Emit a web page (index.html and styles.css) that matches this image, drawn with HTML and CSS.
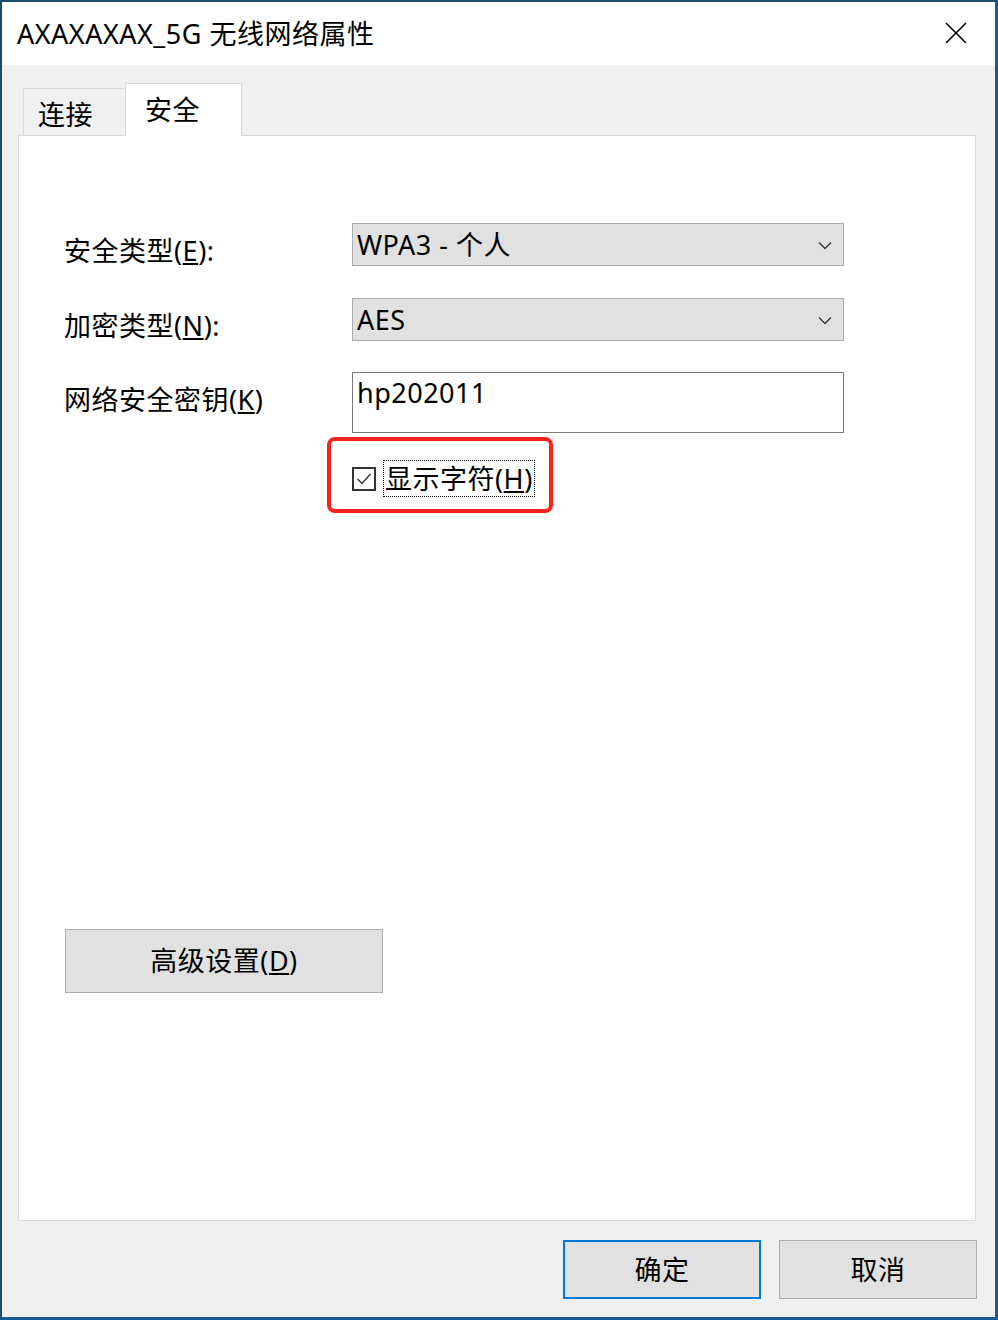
FILE: index.html
```html
<!DOCTYPE html>
<html lang="zh-CN">
<head>
<meta charset="utf-8">
<title>AXAXAXAX_5G 无线网络属性</title>
<link rel="stylesheet" href="styles.css">
</head>
<body>
<div class="window">
  <div class="titlebar">
    <span class="title">AXAXAXAX_5G 无线网络属性</span>
    <svg class="close" width="22" height="22" viewBox="0 0 22 22"><path d="M1 1 L21 21 M21 1 L1 21" stroke="#000" stroke-width="1.6" fill="none"/></svg>
  </div>
  <div class="content">
    <div class="tabs">
      <div class="tab">连接</div>
      <div class="tab active">安全</div>
    </div>
    <div class="panel">
      <div class="row">
        <div class="label">安全类型(<u>E</u>):</div>
        <div class="combo"><span>WPA3 - 个人</span><svg class="chev" width="14" height="9" viewBox="0 0 14 9"><polyline points="1,1.5 7,7.5 13,1.5" stroke="#333" stroke-width="1.3" fill="none"/></svg></div>
      </div>
      <div class="row">
        <div class="label">加密类型(<u>N</u>):</div>
        <div class="combo"><span>AES</span><svg class="chev" width="14" height="9" viewBox="0 0 14 9"><polyline points="1,1.5 7,7.5 13,1.5" stroke="#333" stroke-width="1.3" fill="none"/></svg></div>
      </div>
      <div class="row">
        <div class="label">网络安全密钥(<u>K</u>)</div>
        <div class="textbox">hp202011</div>
      </div>
      <div class="checkrow">
        <div class="checkbox"><svg width="20" height="20" viewBox="0 0 20 20"><polyline points="3.5,10 8,14.5 16.5,5" stroke="#333" stroke-width="1.4" fill="none"/></svg></div>
        <div class="checklabel">显示字符(<u>H</u>)</div>
      </div>
      <div class="highlight"></div>
      <div class="advbtn">高级设置(<u>D</u>)</div>
    </div>
    <div class="buttons">
      <div class="btn primary">确定</div>
      <div class="btn">取消</div>
    </div>
  </div>
</div>
</body>
</html>
```
FILE: styles.css
```css
* { box-sizing: border-box; }
html, body { margin: 0; padding: 0; }
body {
  font-family: "Noto Sans", "Noto Sans CJK SC", sans-serif;
  color: #000;
  background: #1a4f75;
}
.window {
  width: 998px;
  height: 1320px;
  border-style: solid;
  border-color: #1c4e70 #155c96 #155c96 #1c4e70;
  border-width: 2px 3px 3px 2px;
  background: #f0f0f0;
  display: flex;
  flex-direction: column;
  font-size: 27px;
  letter-spacing: 0.5px;
}
.titlebar {
  height: 63px;
  background: #fff;
  display: flex;
  align-items: center;
  justify-content: space-between;
  padding: 0 28px 0 15px;
}
.title {
  line-height: 34px;
}
.close { display: block; margin-top: -2px; }
.content {
  flex: 1;
  display: flex;
  flex-direction: column;
  padding: 18px 18px 18px 16px;
}
.tabs {
  display: flex;
  align-items: flex-end;
  padding-left: 5px;
  height: 52px;
}
.tab {
  height: 47px;
  width: 103px;
  border: 1px solid #d9d9d9;
  border-bottom: none;
  background: #f0f0f0;
  line-height: 34px;
  padding: 9px 0 0 14px;
}
.tab.active {
  height: 53px;
  width: 117px;
  margin-left: -1px;
  margin-bottom: -1px;
  background: #fff;
  padding: 9px 0 0 19px;
  position: relative;
  z-index: 2;
}
.panel {
  width: 958px;
  height: 1086px;
  background: #fff;
  border: 1px solid #d9d9d9;
  position: relative;
  z-index: 1;
  display: flex;
  flex-direction: column;
  padding: 87px 0 0 45px;
}
.row {
  display: flex;
  align-items: flex-start;
  margin-bottom: 32px;
}
.row:nth-child(2) { margin-bottom: 31px; }
.row:nth-child(3) { margin-bottom: 0; }
.label {
  width: 288px;
  height: 43px;
  line-height: 31px;
  padding-top: 12px;
}
.combo {
  width: 492px;
  height: 43px;
  background: #e1e1e1;
  border: 1px solid #adadad;
  display: flex;
  align-items: center;
  justify-content: space-between;
  padding: 0 11px 0 4px;
  line-height: 34px;
}
.chev { display: block; margin-top: 2px; }
.textbox {
  width: 492px;
  height: 61px;
  background: #fff;
  border: 1px solid #7a7a7a;
  line-height: 34px;
  padding: 3px 0 0 4px;
}
.checkrow {
  display: flex;
  align-items: center;
  margin: 27px 0 0 288px;
  height: 37px;
}
.checkbox {
  width: 24px;
  height: 24px;
  border: 2px solid #333;
  display: flex;
  align-items: center;
  justify-content: center;
}
.checkbox svg { display: block; }
.checklabel {
  margin-left: 7px;
  height: 37px;
  border: 1px dotted #000;
  line-height: 35px;
  padding: 0 1px;
}
.highlight {
  position: absolute;
  left: 308px;
  top: 301px;
  width: 226px;
  height: 76px;
  border: 4px solid #f5231b;
  border-radius: 8px;
}
.advbtn {
  margin: 432px 0 0 1px;
  width: 318px;
  height: 64px;
  background: #e1e1e1;
  border: 1px solid #adadad;
  display: flex;
  align-items: center;
  justify-content: center;
  line-height: 34px;
}
.buttons {
  display: flex;
  justify-content: flex-end;
  gap: 18px;
  margin-top: 19px;
}
.btn {
  width: 198px;
  height: 59px;
  background: #e1e1e1;
  border: 1px solid #adadad;
  display: flex;
  align-items: center;
  justify-content: center;
  line-height: 34px;
}
.btn.primary { border: 2px solid #0078d7; }
```
